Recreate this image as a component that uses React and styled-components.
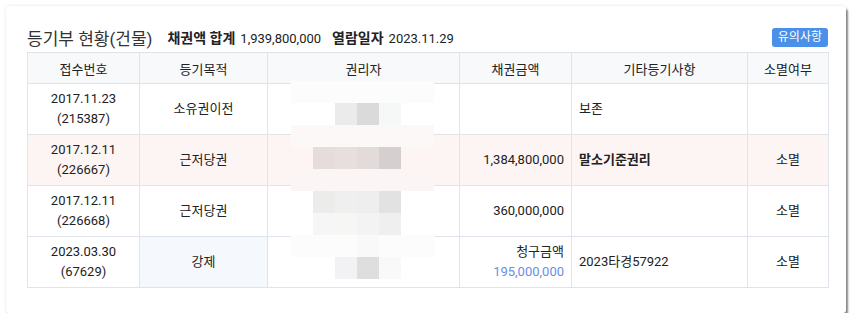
import React from "react";
import styled, { createGlobalStyle } from "styled-components";

const GlobalStyle = createGlobalStyle`
  body {
    margin: 0;
    background: #ffffff;
    font-family: Roboto, "Noto Sans CJK KR", sans-serif;
    color: #222;
  }
`;

const Card = styled.div`
  margin: 6px 0 0 6px;
  width: 840px;
  height: 307px;
  box-sizing: border-box;
  padding: 16px 18px 0 21px;
  background: #fff;
  border-radius: 3px;
  box-shadow: 0 0 3px rgba(0, 0, 0, 0.12), 2px 3px 2px rgba(0, 0, 0, 0.45);
`;

const TitleBar = styled.div`
  display: flex;
  align-items: center;
  height: 30px;
`;

const Title = styled.h2`
  margin: 0 15px 0 0;
  font-size: 17px;
  font-weight: 400;
  color: #333;
`;

const Meta = styled.span`
  font-size: 13px;
  margin-right: 11px;
  b {
    font-size: 14px;
    font-weight: 700;
    margin-right: 5px;
  }
`;

const Badge = styled.span`
  margin-left: auto;
  background: #4a90e8;
  color: #fff;
  font-size: 12px;
  padding: 2px 6px;
  border-radius: 3px;
  line-height: 15px;
`;

const TableWrap = styled.div`
  position: relative;
  width: 801px;
`;

const Table = styled.table`
  width: 801px;
  border-collapse: collapse;
  table-layout: fixed;
  font-size: 13px;
`;

const Th = styled.th`
  height: 30px;
  padding: 0;
  background: #f8f9fa;
  border: 1px solid #dfe3ea;
  font-weight: 400;
  font-size: 13px;
  color: #222;
`;

const Tr = styled.tr`
  background: ${(p) => (p.$hl ? "#fdf5f4" : "#fff")};
`;

const Td = styled.td`
  height: 50px;
  padding: 0 7px;
  border: 1px solid #dfe3ea;
  line-height: 20px;
  text-align: ${(p) => p.$align || "center"};
  font-weight: ${(p) => (p.$bold ? 700 : 400)};
  background: ${(p) => (p.$blue ? "#f5f9fd" : "transparent")};
`;

const Claim = styled.span`
  display: block;
  color: #6a8ee8;
`;

const Mosaic = styled.div`
  position: absolute;
  left: 264px;
  top: 29px;
  display: grid;
  grid-template-columns: 22px 22px 22px 22px 22px 33px;
  grid-auto-rows: 22px;
`;

const Pixel = styled.div`
  background: ${(p) => p.$c || "transparent"};
`;

const mosaic = [
  ["#fcfcfc", "#fcfcfc", "#fcfcfc", "#fcfcfc", "#fcfcfc", "#fcfcfc"],
  [null, null, "#ebebeb", "#dadada", "#f6f7f7", null],
  ["#fcf8f7", "#fcf8f7", "#fcf8f7", "#fcf8f7", "#fcf8f7", "#fcf8f7"],
  [null, "#e5dcdb", "#e6dfde", "#e3dada", "#d5cfcf", null],
  ["#fbf6f5", "#fbf6f5", "#fbf6f5", "#fbf6f5", "#fbf6f5", "#fbf6f5"],
  [null, "#ececeb", "#efefef", "#eeeeee", "#e2e2e2", null],
  [null, "#f6f6f6", "#f6f6f5", "#f3f3f3", "#efefef", null],
  ["#fcfcfc", "#fcfcfc", "#fcfcfc", "#f9f9f9", "#fcfcfc", "#fcfcfc"],
  [null, null, "#f2f1f3", "#dedede", "#f9f9f9", null],
];

const rows = [
  { date: "2017.11.23", no: "(215387)", purpose: "소유권이전", amount: "", etc: "보존", gone: "" },
  { date: "2017.12.11", no: "(226667)", purpose: "근저당권", amount: "1,384,800,000", etc: "말소기준권리", gone: "소멸", hl: true, bold: true },
  { date: "2017.12.11", no: "(226668)", purpose: "근저당권", amount: "360,000,000", etc: "", gone: "소멸" },
  { date: "2023.03.30", no: "(67629)", purpose: "강제", claim: "195,000,000", etc: "2023타경57922", gone: "소멸", blue: true },
];

export default function App() {
  return (
    <>
      <GlobalStyle />
      <Card>
        <TitleBar>
          <Title>등기부 현황(건물)</Title>
          <Meta>
            <b>채권액 합계</b>1,939,800,000
          </Meta>
          <Meta>
            <b>열람일자</b>2023.11.29
          </Meta>
          <Badge>유의사항</Badge>
        </TitleBar>
        <TableWrap>
          <Table>
            <colgroup>
              <col style={{ width: 112 }} />
              <col style={{ width: 128 }} />
              <col style={{ width: 192 }} />
              <col style={{ width: 112 }} />
              <col style={{ width: 176 }} />
              <col style={{ width: 81 }} />
            </colgroup>
            <thead>
              <tr>
                <Th>접수번호</Th>
                <Th>등기목적</Th>
                <Th>권리자</Th>
                <Th>채권금액</Th>
                <Th>기타등기사항</Th>
                <Th>소멸여부</Th>
              </tr>
            </thead>
            <tbody>
              {rows.map((r, i) => (
                <Tr key={i} $hl={r.hl}>
                  <Td>
                    {r.date}
                    <br />
                    {r.no}
                  </Td>
                  <Td $blue={r.blue}>{r.purpose}</Td>
                  <Td />
                  <Td $align="right">
                    {r.claim ? (
                      <>
                        청구금액
                        <Claim>{r.claim}</Claim>
                      </>
                    ) : (
                      r.amount
                    )}
                  </Td>
                  <Td $align="left" $bold={r.bold}>
                    {r.etc}
                  </Td>
                  <Td>{r.gone}</Td>
                </Tr>
              ))}
            </tbody>
          </Table>
          <Mosaic>
            {mosaic.flat().map((c, i) => (
              <Pixel key={i} $c={c} />
            ))}
          </Mosaic>
        </TableWrap>
      </Card>
    </>
  );
}
